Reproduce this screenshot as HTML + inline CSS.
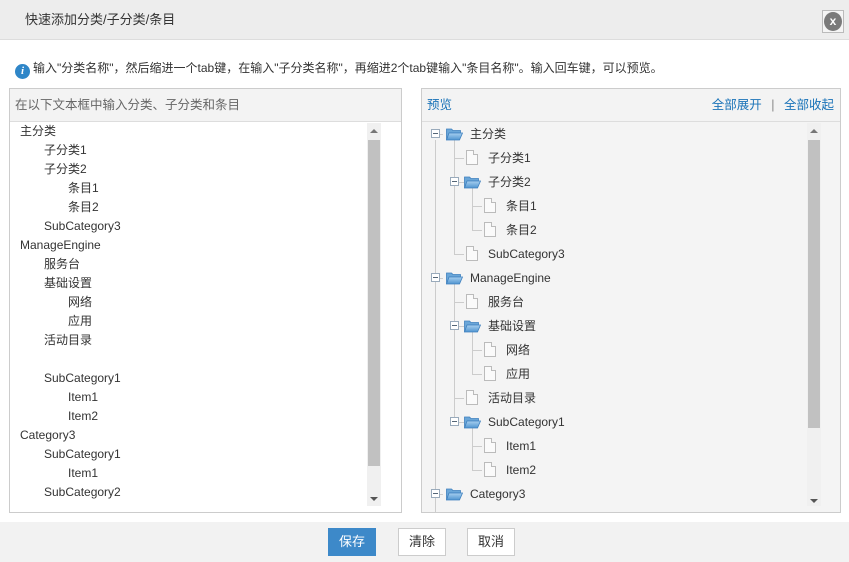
<!DOCTYPE html>
<html><head><meta charset="utf-8"><style>
*{margin:0;padding:0;box-sizing:border-box}
body{width:849px;height:562px;background:#fff;font-family:"Liberation Sans","Noto Sans CJK SC",sans-serif;font-size:12px;color:#333;position:relative;overflow:hidden}
.hdr{position:absolute;left:0;top:0;width:849px;height:40px;background:#ededed;border-bottom:1px solid #ddd}
.hdr .t{position:absolute;left:25px;top:11px;font-size:13px;color:#333;line-height:18px}
.cls{position:absolute;left:822px;top:10px;width:22px;height:23px;border:1px solid #bbb;background:#f5f5f5}
.cls div{position:absolute;left:1px;top:1px;width:18px;height:19px;border-radius:50%;background:#7a7a7a;color:#fff;font-size:12px;line-height:19px;text-align:center;font-weight:bold}
.info{position:absolute;left:15px;top:60px;font-size:12px;color:#333;line-height:16px}
.info i{display:inline-block;width:15px;height:15px;border-radius:50%;background:#2f86c8;color:#fff;font-style:italic;font-weight:bold;text-align:center;line-height:15px;font-size:11px;vertical-align:-2px;margin-right:3px;font-family:"Liberation Serif",serif}
.lp{position:absolute;left:9px;top:88px;width:393px;height:425px;border:1px solid #ccc;background:#fff}
.ph{height:33px;border-bottom:1px solid #ddd;background:#f3f3f3;padding:8px 5px;color:#666;font-size:12.5px;line-height:16px}
.rp{position:absolute;left:421px;top:88px;width:420px;height:425px;border:1px solid #ccc;background:#f4f4f4}
.rp .ph{color:#1a73b8}
.sb{position:absolute;width:14px;background:#f0f0f0}
.th{position:absolute;left:1px;width:12px;background:#c1c1c1}
.ar{position:absolute;left:3px;width:0;height:0;border-left:4px solid transparent;border-right:4px solid transparent}
.ln{position:absolute;font-size:12px;color:#333;white-space:nowrap;line-height:16px}
.foot{position:absolute;left:0;top:522px;width:849px;height:40px;background:#f2f2f2}
.btn{position:absolute;top:6px;height:28px;border:1px solid #ccc;background:#fff;font-size:13px;text-align:center;line-height:26px;color:#333}
.vl{position:absolute;border-left:1px solid #ccc}
.hl{position:absolute;border-top:1px solid #ccc}
.tg{position:absolute;width:9px;height:9px;border:1px solid #9ab;background:#fff}
.tg:after{content:"";position:absolute;left:1px;top:3px;width:5px;height:1px;background:#567}
.fd{position:absolute;width:17px;height:13px}
.fl{position:absolute;width:12px;height:15px;background:#fafafa;border:1px solid #bbb}
.fl:after{content:"";position:absolute;right:-1px;top:-1px;width:4px;height:4px;background:#f4f4f4;border-left:1px solid #bbb;border-bottom:1px solid #bbb}
</style></head><body>
<div class="hdr"><div class="t">快速添加分类/子分类/条目</div><div class="cls"><div>x</div></div></div>
<div class="info"><i>i</i>输入"分类名称"，然后缩进一个tab键，在输入"子分类名称"，再缩进2个tab键输入"条目名称"。输入回车键，可以预览。</div>
<div class="lp"><div class="ph">在以下文本框中输入分类、子分类和条目</div>
<div class="sb" style="left:357px;top:34px;height:383px"><div class="ar" style="top:6px;border-bottom:4px solid #777"></div><div class="th" style="top:17px;height:326px"></div><div class="ar" style="top:374px;border-top:4px solid #555"></div></div>
</div>
<div class="ln" style="left:20px;top:123px">主分类</div>
<div class="ln" style="left:44px;top:142px">子分类1</div>
<div class="ln" style="left:44px;top:161px">子分类2</div>
<div class="ln" style="left:68px;top:180px">条目1</div>
<div class="ln" style="left:68px;top:199px">条目2</div>
<div class="ln" style="left:44px;top:218px">SubCategory3</div>
<div class="ln" style="left:20px;top:237px">ManageEngine</div>
<div class="ln" style="left:44px;top:256px">服务台</div>
<div class="ln" style="left:44px;top:275px">基础设置</div>
<div class="ln" style="left:68px;top:294px">网络</div>
<div class="ln" style="left:68px;top:313px">应用</div>
<div class="ln" style="left:44px;top:332px">活动目录</div>
<div class="ln" style="left:44px;top:370px">SubCategory1</div>
<div class="ln" style="left:68px;top:389px">Item1</div>
<div class="ln" style="left:68px;top:408px">Item2</div>
<div class="ln" style="left:20px;top:427px">Category3</div>
<div class="ln" style="left:44px;top:446px">SubCategory1</div>
<div class="ln" style="left:68px;top:465px">Item1</div>
<div class="ln" style="left:44px;top:484px">SubCategory2</div>
<div class="rp"><div class="ph">预览<span style="position:absolute;right:6px;top:8px">全部展开 <span style="color:#888;margin:0 6px">|</span> 全部收起</span></div>
<div class="sb" style="left:385px;top:34px;height:383px"><div class="ar" style="top:6px;border-bottom:4px solid #777"></div><div class="th" style="top:17px;height:288px"></div><div class="ar" style="top:376px;border-top:4px solid #555"></div></div>
</div>
<svg width="0" height="0" style="position:absolute"><defs><linearGradient id="g" x1="0" y1="0" x2="0" y2="1"><stop offset="0" stop-color="#a8d0f0"/><stop offset="1" stop-color="#4f94d0"/></linearGradient></defs></svg>
<div id="tree"></div>
<script>
var rows=[[0,'主分类',1],[1,'子分类1',0],[1,'子分类2',1],[2,'条目1',0],[2,'条目2',0],[1,'SubCategory3',0],[0,'ManageEngine',1],[1,'服务台',0],[1,'基础设置',1],[2,'网络',0],[2,'应用',0],[1,'活动目录',0],[1,'SubCategory1',1],[2,'Item1',0],[2,'Item2',0],[0,'Category3',1]];
var h='';
h+='<div class="vl" style="left:435px;top:140px;height:372px"></div>';
h+='<div class="vl" style="left:454px;top:140px;height:114px"></div>';
h+='<div class="vl" style="left:454px;top:284px;height:138px"></div>';
h+='<div class="vl" style="left:472px;top:188px;height:42px"></div>';
h+='<div class="vl" style="left:472px;top:332px;height:42px"></div>';
h+='<div class="vl" style="left:472px;top:428px;height:42px"></div>';
rows.forEach(function(r,i){var y=134+i*24,lx=435+r[0]*18.5;
 if(r[0]>0)h+='<div class="hl" style="left:'+(lx)+'px;top:'+y+'px;width:10px"></div>';
 if(r[2]){var tx=r[0]==0?431:450;h+='<div class="hl" style="left:'+tx+'px;top:'+y+'px;width:12px"></div><div class="tg" style="left:'+tx+'px;top:'+(y-5)+'px"></div>';
  var fx=r[0]==0?446:464;h+='<svg class="fd" style="left:'+fx+'px;top:'+(y-6)+'px" viewBox="0 0 17 13"><path d="M0.5 1h5l1.5 1.5h7.5v2.5H3.5L0.5 12z" fill="#6aa6d8" stroke="#3f80be" stroke-width="0.8"/><path d="M3 5h13.5l-3 7H0.5z" fill="url(#g)" stroke="#3f80be" stroke-width="0.8"/></svg>';
  h+='<div class="ln" style="left:'+(fx+24)+'px;top:'+(y-8)+'px">'+r[1]+'</div>';}
 else{var fx=r[0]==1?466:484;h+='<div class="fl" style="left:'+fx+'px;top:'+(y-8)+'px"></div><div class="ln" style="left:'+(fx+22)+'px;top:'+(y-8)+'px">'+r[1]+'</div>';}
});
document.getElementById('tree').innerHTML=h;
</script>
<div class="foot">
<div class="btn" style="left:328px;width:48px;background:#3d89c9;border-color:#3d89c9;color:#fff">保存</div>
<div class="btn" style="left:398px;width:48px">清除</div>
<div class="btn" style="left:467px;width:48px">取消</div>
</div>
</body></html>
